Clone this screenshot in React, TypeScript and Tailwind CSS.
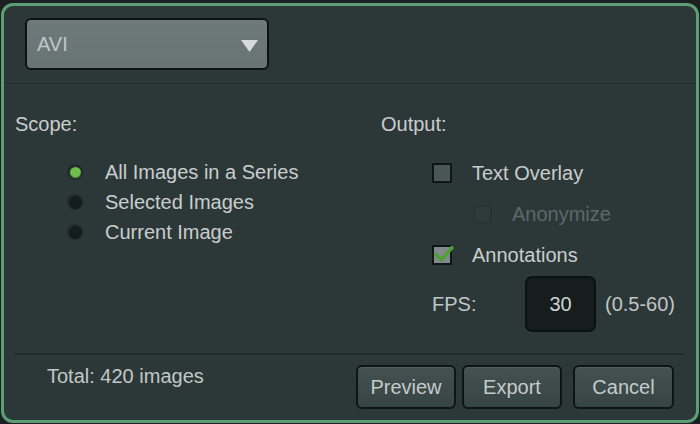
import { useState } from 'react'

const font = { fontFamily: '"Liberation Sans", Arial, Helvetica, sans-serif' }

function Radio({ checked, label, onClick }: { checked: boolean; label: string; onClick: () => void }) {
  return (
    <div className="flex h-[30px] items-center cursor-pointer" onClick={onClick}>
      <div className="ml-[52px] flex h-[16px] w-[16px] items-center justify-center rounded-full bg-[#222c2c]">
        {checked ? (
          <div className="h-[11px] w-[11px] rounded-full bg-[#6fbd4c] shadow-[inset_0_-1px_1px_rgba(0,0,0,0.25)]" />
        ) : (
          <div className="h-[13px] w-[13px] rounded-full bg-[#151c1c]" />
        )}
      </div>
      <span className="ml-[22px] text-[20px] leading-[22px] text-[#c9cdcd]">{label}</span>
    </div>
  )
}

function Check({ checked, disabled }: { checked?: boolean; disabled?: boolean }) {
  if (disabled) {
    return <div className="h-[19px] w-[19px] border-2 border-[#283333] bg-[#2e3a3a]" />
  }
  return (
    <div
      className={`relative h-[20px] w-[20px] border-2 border-[#101515] ${checked ? 'bg-[#808a8a]' : 'bg-[#4a5555]'}`}
    >
      {checked && (
        <svg viewBox="0 0 20 20" className="absolute -left-[1px] -top-[4px] h-[21px] w-[21px]">
          <path d="M2.5 11 L8 16 L18 4.5" fill="none" stroke="#4d9f36" strokeWidth="3.4" strokeLinecap="round" strokeLinejoin="round" />
        </svg>
      )}
    </div>
  )
}

function Button({ label, className }: { label: string; className?: string }) {
  return (
    <button
      className={`h-[44px] rounded-[6px] border-2 border-[#0f1414] bg-gradient-to-b from-[#435151] to-[#374444] text-[20px] text-[#c6caca] shadow-[inset_0_1px_0_rgba(255,255,255,0.08)] ${className ?? ''}`}
    >
      {label}
    </button>
  )
}

export default function App() {
  const [scope, setScope] = useState('all')

  return (
    <div className="h-[424px] w-[700px] bg-[#1c2020] pl-[1px] pr-[1px] pt-[3px] pb-[1px]" style={font}>
      <div className="flex h-full flex-col rounded-[12px] border-[3px] border-[#5c9e76] bg-[#2c3838]">
        {/* Format dropdown */}
        <div className="h-[77px] px-[21px] pt-[12px]">
          <div className="flex h-[52px] w-[244px] items-center justify-between rounded-[6px] border-2 border-[#0e1212] bg-gradient-to-b from-[#6e7a7a] to-[#687474] pl-[10px] pr-[9px]">
            <span className="text-[20px] text-[#c0c6c6]">AVI</span>
            <svg width="17" height="12" viewBox="0 0 17 12" className="mt-[3px]">
              <path d="M0 0 H17 L8.5 12 Z" fill="#d6dada" />
            </svg>
          </div>
        </div>
        <div className="h-[1px] bg-[#1f2929]" />
        <div className="h-[1px] bg-[#303d3d]" />

        {/* Options */}
        <div className="flex h-[268px] pt-[28px]">
          <div className="w-[377px] pl-[11px]">
            <div className="text-[20px] leading-[22px] text-[#c9cdcd]">Scope:</div>
            <div className="mt-[22px]">
              <Radio checked={scope === 'all'} label="All Images in a Series" onClick={() => setScope('all')} />
              <Radio checked={scope === 'selected'} label="Selected Images" onClick={() => setScope('selected')} />
              <Radio checked={scope === 'current'} label="Current Image" onClick={() => setScope('current')} />
            </div>
          </div>
          <div className="flex-1">
            <div className="text-[20px] leading-[22px] text-[#c9cdcd]">Output:</div>
            <div className="mt-[18px] flex h-[40px] items-center pl-[51px]">
              <Check />
              <span className="ml-[20px] text-[20px] text-[#c9cdcd]">Text Overlay</span>
            </div>
            <div className="flex h-[42px] items-center pl-[92px]">
              <Check disabled />
              <span className="ml-[20px] text-[20px] text-[#5d6868]">Anonymize</span>
            </div>
            <div className="flex h-[40px] items-center pl-[51px]">
              <Check checked />
              <span className="ml-[20px] text-[20px] text-[#c9cdcd]">Annotations</span>
            </div>
            <div className="flex h-[58px] items-center pl-[51px]">
              <span className="w-[93px] text-[20px] text-[#c0c5c5]">FPS:</span>
              <div className="flex h-[56px] w-[71px] items-center justify-center rounded-[7px] border-2 border-[#0c1111] bg-[#151d1d] text-[20px] text-[#d0d4d4]">
                30
              </div>
              <span className="ml-[9px] text-[20px] text-[#c0c5c5]">(0.5-60)</span>
            </div>
          </div>
        </div>

        {/* Footer */}
        <div className="ml-[10px] mr-[12px] h-[2px] bg-[#222b2b]" />
        <div className="flex flex-1 items-start">
          <div className="ml-[43px] mt-[10px] text-[20px] leading-[22px] text-[#c2c7c7]">Total: 420 images</div>
          <div className="ml-auto mr-[22px] mt-[10px] flex">
            <Button label="Preview" className="w-[100px]" />
            <Button label="Export" className="ml-[6px] w-[100px]" />
            <Button label="Cancel" className="ml-[11px] w-[101px]" />
          </div>
        </div>
      </div>
    </div>
  )
}
